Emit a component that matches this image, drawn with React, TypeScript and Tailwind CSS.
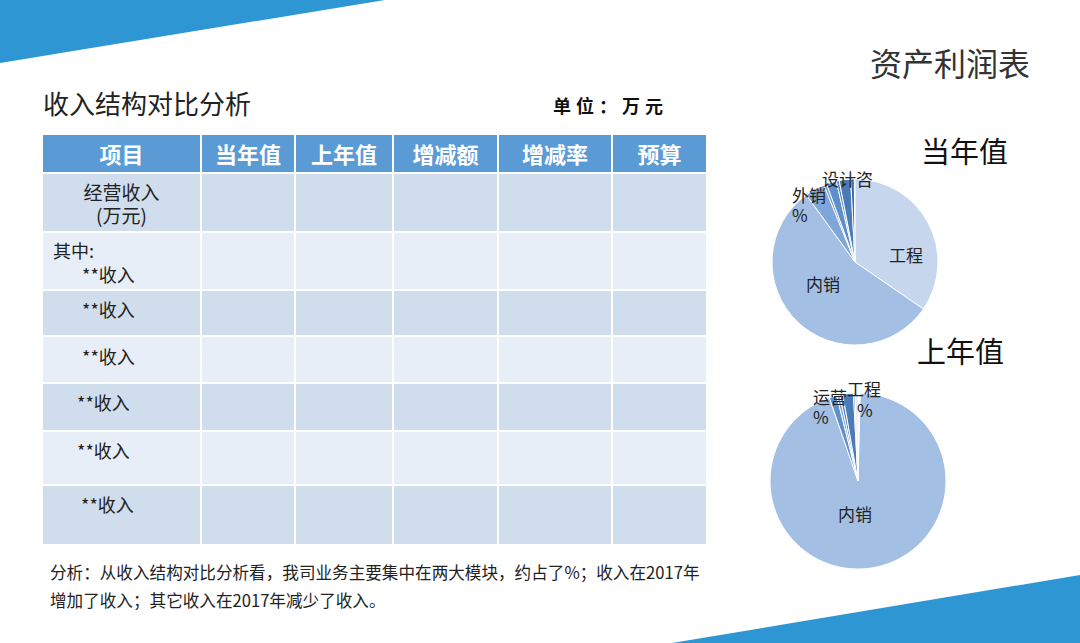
import type { ReactNode } from "react";

const FONT = { fontFamily: '"Noto Sans CJK SC", "Noto Sans", sans-serif' };

type Slice = { from: number; to: number; color: string };

// 角度从 12 点方向顺时针计
function arcPath(cx: number, cy: number, r: number, from: number, to: number) {
  const rad = (d: number) => ((d - 90) * Math.PI) / 180;
  const x1 = cx + r * Math.cos(rad(from));
  const y1 = cy + r * Math.sin(rad(from));
  const x2 = cx + r * Math.cos(rad(to));
  const y2 = cy + r * Math.sin(rad(to));
  const large = to - from > 180 ? 1 : 0;
  return `M${cx},${cy} L${x1},${y1} A${r},${r} 0 ${large} 1 ${x2},${y2} Z`;
}

const currentSlices: Slice[] = [
  { from: 0, to: 124.5, color: "#c5d6ed" },
  { from: 124.5, to: 324, color: "#a3bfe3" },
  { from: 324, to: 338, color: "#7fa6d8" },
  { from: 338, to: 340, color: "#6e9ad2" },
  { from: 340, to: 347, color: "#5e8fca" },
  { from: 347, to: 349, color: "#5584c0" },
  { from: 349, to: 357, color: "#4a7bb6" },
  { from: 357, to: 359.5, color: "#3d6aa3" },
];

const lastSlices: Slice[] = [
  { from: 1.5, to: 341, color: "#a3bfe3" },
  { from: 341, to: 346, color: "#5f90cb" },
  { from: 346, to: 348, color: "#7aa2d6" },
  { from: 348, to: 350, color: "#5584c0" },
  { from: 350, to: 357, color: "#4a7bb6" },
  { from: 357, to: 358, color: "#3d6aa3" },
  { from: 358, to: 360, color: "#dfe8f4" },
];

function Pie({
  cx,
  cy,
  r,
  slices,
  height,
  children,
}: {
  cx: number;
  cy: number;
  r: number;
  slices: Slice[];
  height: number;
  children: ReactNode;
}) {
  return (
    <svg width={260} height={height} className="ml-[54px] overflow-visible" style={FONT}>
      {slices.map((s, i) => (
        <path key={i} d={arcPath(cx, cy, r, s.from, s.to)} fill={s.color} stroke="#ffffff" strokeWidth={1} />
      ))}
      <g fontSize={17} fill="#222">
        {children}
      </g>
    </svg>
  );
}

const headers = ["项目", "当年值", "上年值", "增减额", "增减率", "预算"];

const rows: { label: ReactNode; dark: boolean }[] = [
  {
    label: (
      <div className="pt-[6px] text-center text-[19px] leading-[23px]">
        经营收入
        <br />
        (万元)
      </div>
    ),
    dark: true,
  },
  {
    label: (
      <div className="pl-[10px] pt-[5px] leading-[24px]">
        其中:
        <br />
        <span className="pl-[29px]">**收入</span>
      </div>
    ),
    dark: false,
  },
  { label: <div className="pl-[39px] pt-[6px]">**收入</div>, dark: true },
  { label: <div className="pl-[39px] pt-[7px]">**收入</div>, dark: false },
  { label: <div className="pl-[34px] pt-[6px]">**收入</div>, dark: true },
  { label: <div className="pl-[34px] pt-[6px]">**收入</div>, dark: false },
  { label: <div className="pl-[38px] pt-[6px]">**收入</div>, dark: true },
];

export default function App() {
  return (
    <div className="relative h-[643px] w-[1080px] overflow-hidden bg-white text-[#222]" style={FONT}>
      {/* 背景装饰三角 */}
      <svg className="absolute left-0 top-0" width={1080} height={643}>
        <polygon points="0,0 385,0 0,63" fill="#2e97d3" />
        <polygon points="672,643 1080,575 1080,643" fill="#2e97d3" />
      </svg>

      <div className="relative flex">
        {/* 左侧：表格 */}
        <div className="w-[706px] shrink-0 pl-[43px]">
          <div className="mt-[86px] flex items-start">
            <h1 className="text-[26px] font-normal leading-[34px] text-[#222]">收入结构对比分析</h1>
            <div className="ml-auto mr-[38px] mt-[9px] text-[18px] font-bold leading-[20px] tracking-[5px] text-[#111]">
              单位：万元
            </div>
          </div>

          <div className="mt-[15px] grid grid-cols-[157px_92px_96px_103px_112px_93px] grid-rows-[37px_57px_56px_44px_45px_46px_52px_58px] gap-[2px]">
            {headers.map((h) => (
              <div
                key={h}
                className="flex items-center justify-center bg-[#5b9bd5] text-[22px] font-bold text-white"
              >
                {h}
              </div>
            ))}
            {rows.map((row, i) => {
              const bg = row.dark ? "bg-[#d0ddec]" : "bg-[#e8eef7]";
              return [
                <div key={`l${i}`} className={`${bg} text-[18px] leading-[24px] text-[#222]`}>
                  {row.label}
                </div>,
                ...[0, 1, 2, 3, 4].map((c) => <div key={`c${i}-${c}`} className={bg} />),
              ];
            })}
          </div>

          <p className="mt-[14px] pl-[7px] text-[16.6px] leading-[28px] text-[#222]">
            分析：从收入结构对比分析看，我司业务主要集中在两大模块，约占了%；收入在2017年
            <br />
            增加了收入；其它收入在2017年减少了收入。
          </p>
        </div>

        {/* 右侧：饼图 */}
        <div className="flex-1">
          <div className="mt-[44px] pr-[50px] text-right text-[32px] leading-[36px] text-[#333]">资产利润表</div>

          <div className="mt-[54px] pl-[215px] text-[29px] leading-[32px] text-[#111]">当年值</div>
          <Pie cx={95} cy={96} r={83} slices={currentSlices} height={168}>
            <text x={62} y={20}>设计咨</text>
            <text x={32} y={36}>外销</text>
            <text x={32} y={56}>%</text>
            <text x={129} y={96}>工程</text>
            <text x={46} y={125}>内销</text>
          </Pie>

          <div className="pl-[211px] text-[29px] leading-[32px] text-[#111]">上年值</div>
          <Pie cx={98} cy={115} r={88} slices={lastSlices} height={215}>
            <text x={53} y={38}>运营</text>
            <text x={53} y={58}>%</text>
            <text x={87} y={30}>工程</text>
            <text x={97} y={51}>%</text>
            <text x={78} y={155}>内销</text>
          </Pie>
        </div>
      </div>
    </div>
  );
}
